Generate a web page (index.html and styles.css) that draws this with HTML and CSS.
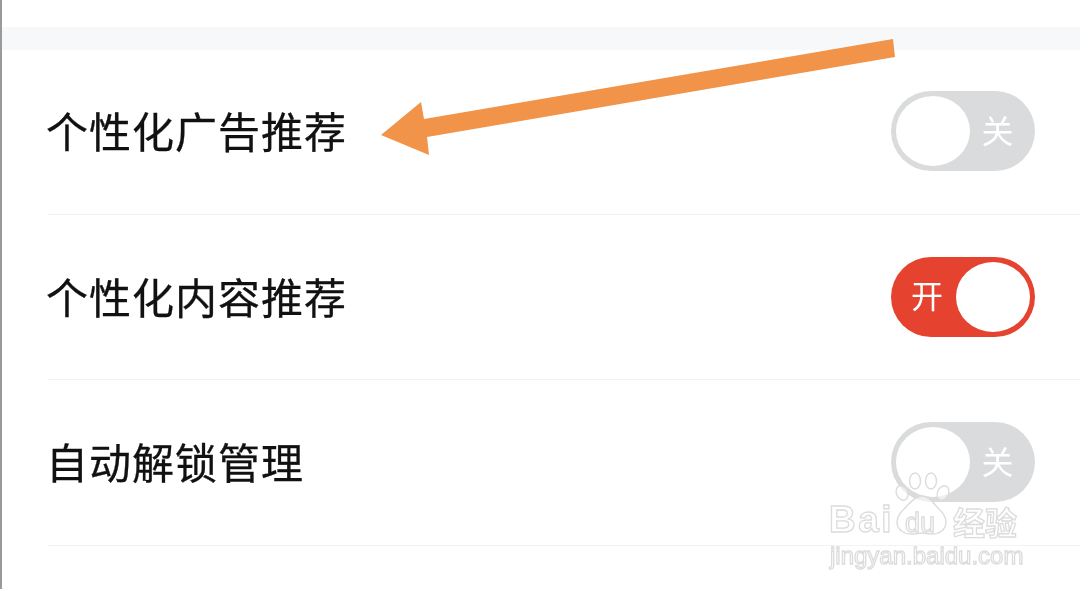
FILE: index.html
```html
<!DOCTYPE html>
<html lang="zh-CN">
<head>
<meta charset="utf-8">
<title>个性化设置</title>
<link rel="stylesheet" href="styles.css">
</head>
<body>
<main class="page">
  <div class="band"></div>
  <section class="list">
    <div class="row">
      <span class="label">个性化广告推荐</span>
      <div class="toggle off"><span class="knob"></span><span class="state">关</span></div>
    </div>
    <div class="row">
      <span class="label">个性化内容推荐</span>
      <div class="toggle on"><span class="state">开</span><span class="knob"></span></div>
    </div>
    <div class="row">
      <span class="label">自动解锁管理</span>
      <div class="toggle off"><span class="knob"></span><span class="state">关</span></div>
    </div>
  </section>

  <svg class="arrow" viewBox="0 0 1080 589" aria-hidden="true">
    <polygon points="893,39 895,57 427,137 429,155 381,135 421,102 424,119" fill="#f19349"/>
  </svg>

  <div class="watermark">
    <span class="wm-bai">Bai</span>
    <svg class="wm-paw" viewBox="0 0 60 64" aria-hidden="true">
      <g fill="#fff" fill-opacity=".55" stroke="#dcdcdc" stroke-width="1.4">
        <ellipse cx="11" cy="21" rx="5.5" ry="7.5" transform="rotate(-25 11 21)"/>
        <ellipse cx="24" cy="9" rx="5.5" ry="8"/>
        <ellipse cx="40" cy="9" rx="5.5" ry="8"/>
        <ellipse cx="52" cy="21" rx="5.5" ry="7.5" transform="rotate(25 52 21)"/>
        <path d="M31 24c6 0 10 5 15 11 5 5 9 9 9 15 0 8-7 12-14 12-4 0-7-1-10-1s-6 1-10 1C13 62 6 58 6 50c0-6 4-10 9-15 5-6 10-11 16-11z"/>
      </g>
    </svg>
    <span class="wm-du">du</span>
    <span class="wm-jy">经验</span>
    <span class="wm-url">jingyan.baidu.com</span>
  </div>
</main>
</body>
</html>
```
FILE: styles.css
```css
* { box-sizing: border-box; }

html, body {
  margin: 0;
  height: 100%;
  background: #fff;
  overflow: hidden;
}

.page {
  position: relative;
  width: 1080px;
  height: 589px;
  padding-top: 27px;
  border-left: 2px solid #9a9a9a;
  background: #fff;
  font-family: "Noto Sans CJK SC", "Noto Sans", sans-serif;
  filter: blur(0.4px);
}

.band {
  height: 23px;
  background: #f7f8f9;
}

.list {
  display: flex;
  flex-direction: column;
  margin-top: -1px;
}

.row {
  display: flex;
  align-items: center;
  justify-content: space-between;
  height: 165.5px;
  margin-left: 46px;
  padding-right: 45px;
  border-bottom: 1px solid #f3f3f3;
}

.label {
  margin-left: -2px;
  margin-bottom: 2px;
  font-size: 42px;
  letter-spacing: 1px;
  line-height: 1;
  color: #111;
  -webkit-text-stroke: 0.3px #111;
}

.toggle {
  display: flex;
  align-items: center;
  width: 144px;
  height: 80px;
  padding: 0 5px;
  border-radius: 40px;
}

.toggle.off {
  justify-content: flex-start;
  background: #d9dbdd;
}

.toggle.on {
  justify-content: flex-end;
  background: #e5432f;
}

.knob {
  flex: none;
  width: 74px;
  height: 70px;
  border-radius: 50%;
  background: #fff;
}

.state {
  flex: 1;
  margin-bottom: 5px;
  font-size: 32px;
  line-height: 1;
  text-align: center;
  color: #fff;
}

.toggle.off .state { padding-right: 5px; }
.toggle.on .state { padding-left: 2px; }

.arrow {
  position: absolute;
  left: -2px;
  top: 0;
  width: 1080px;
  height: 589px;
}

.watermark {
  position: absolute;
  left: -2px;
  top: 0;
  width: 1080px;
  height: 589px;
  color: rgba(255, 255, 255, 0.6);
  -webkit-text-stroke: 1.3px #dcdcdc;
  font-family: "Liberation Sans", sans-serif;
}

.wm-bai,
.wm-du,
.wm-jy,
.wm-url {
  position: absolute;
  line-height: 1;
  white-space: nowrap;
}

.wm-bai {
  left: 829px;
  top: 501px;
  font-size: 37px;
  font-weight: 700;
  letter-spacing: 2.5px;
}

.wm-paw {
  position: absolute;
  left: 891px;
  top: 472px;
  width: 60px;
  height: 64px;
}

.wm-du {
  left: 905px;
  top: 510px;
  font-size: 27px;
}

.wm-jy {
  left: 953px;
  top: 505px;
  font-family: "Noto Sans CJK SC", sans-serif;
  font-size: 32px;
  font-weight: 700;
}

.wm-url {
  left: 830px;
  top: 544px;
  font-size: 24px;
}
```
